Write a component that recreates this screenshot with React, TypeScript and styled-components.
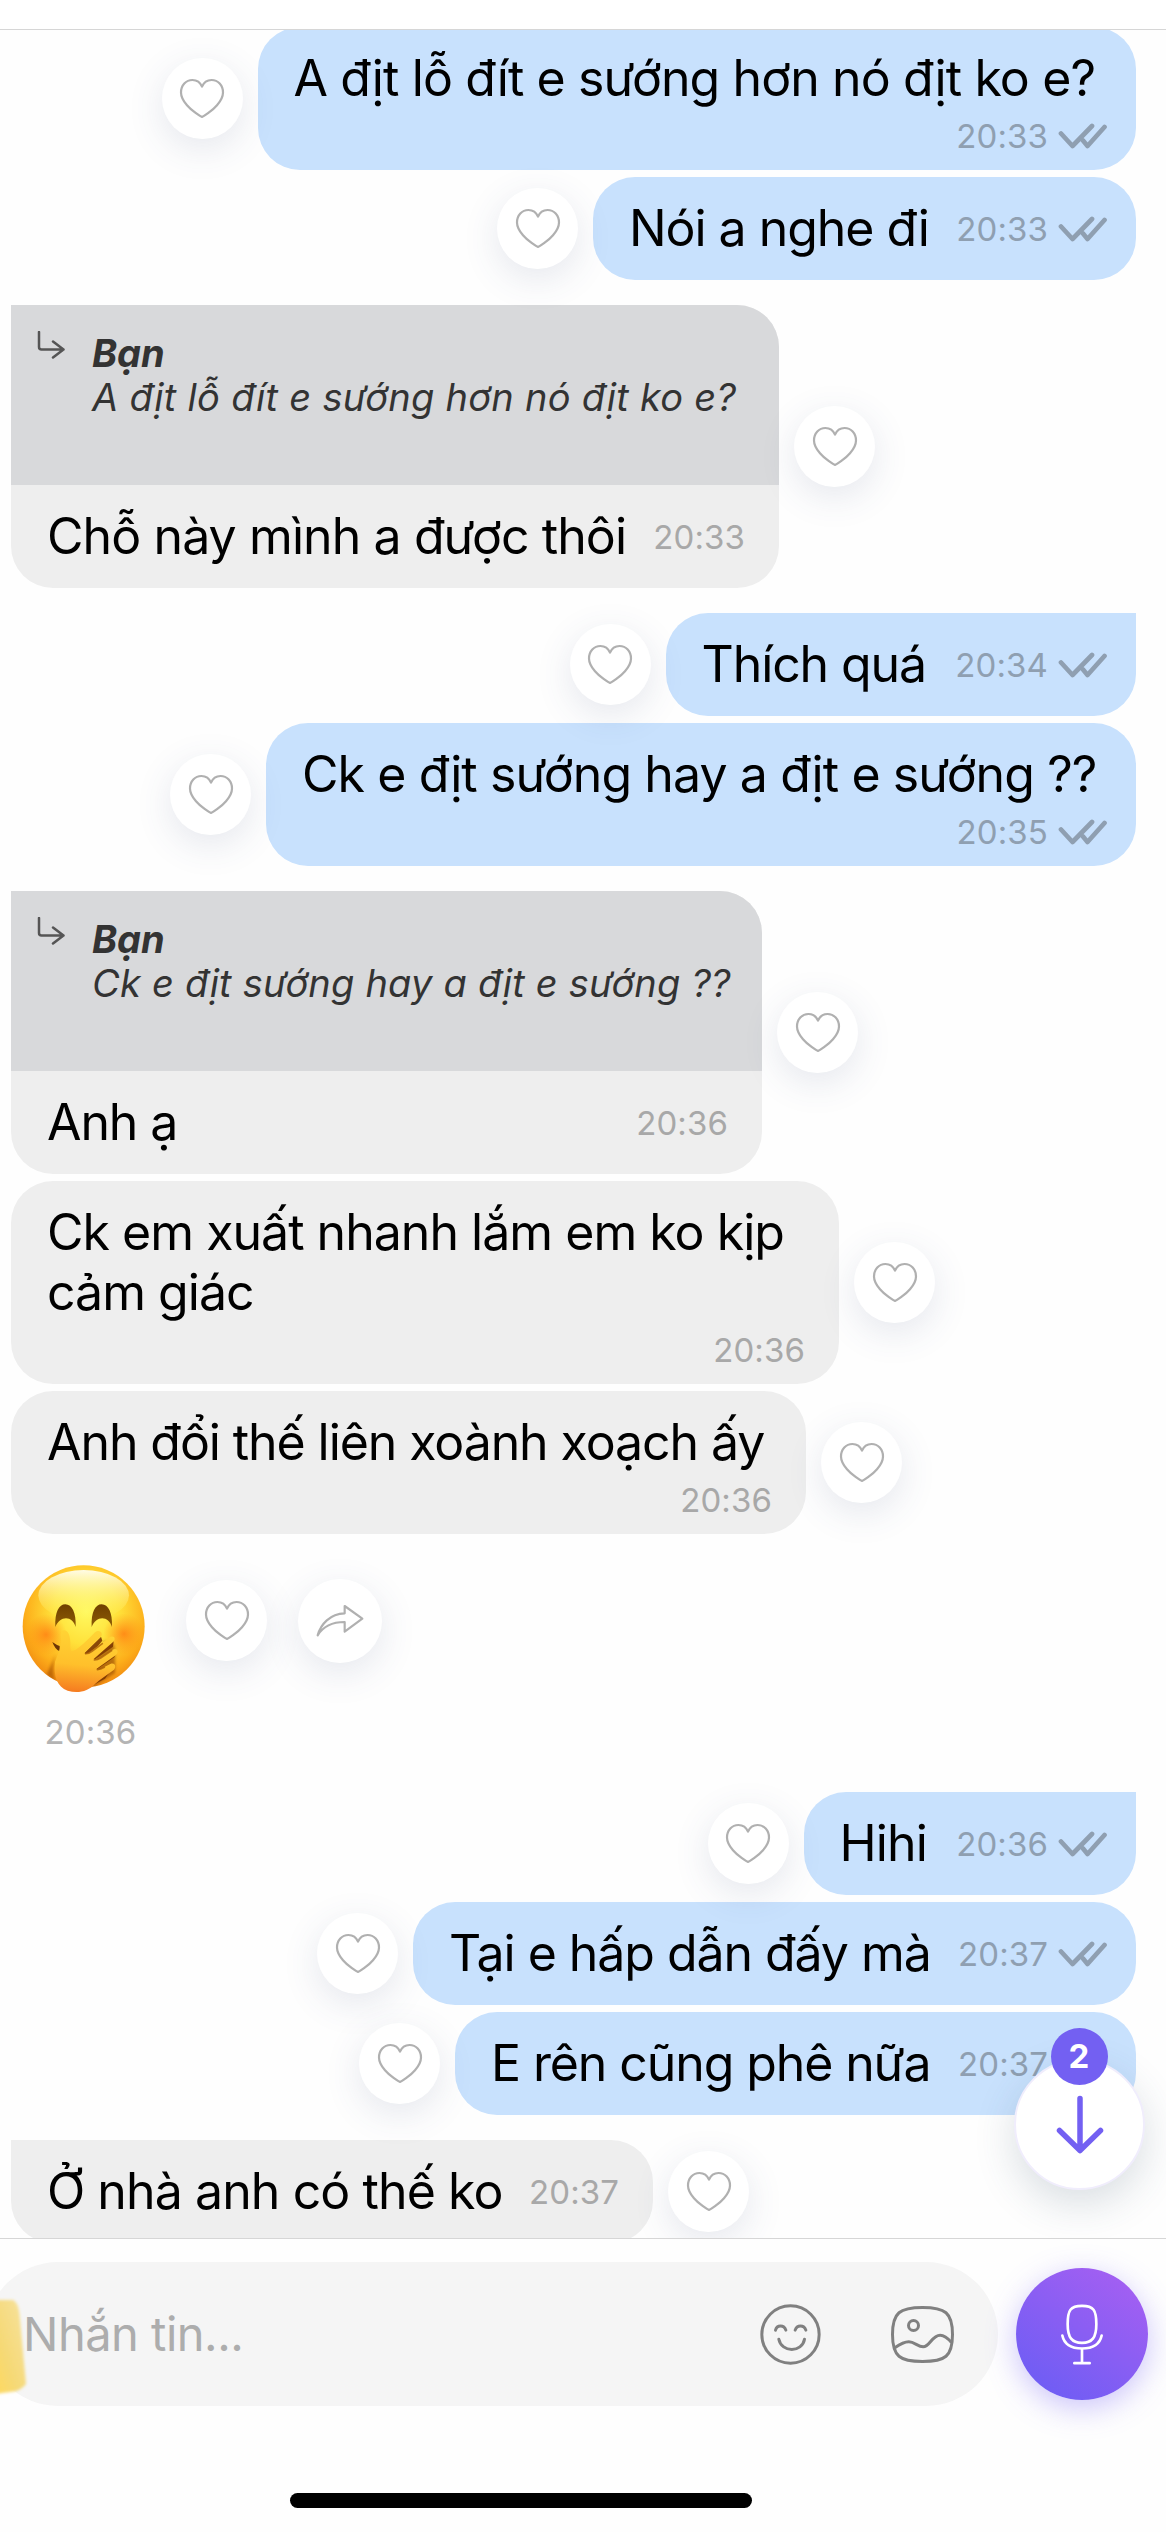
import React from "react";
import styled, { createGlobalStyle, css } from "styled-components";

const Global = createGlobalStyle`
  * { box-sizing: border-box; }
  body {
    margin: 0;
    background: #fefefe;
    font-family: Inter, "Noto Sans", "Liberation Sans", sans-serif;
    color: #000;
  }
`;

const Screen = styled.div`
  width: 1166px;
  height: 2532px;
  display: flex;
  flex-direction: column;
  overflow: hidden;
  background: #fefefe;
`;

const TopBar = styled.header`
  flex: none;
  height: 30px;
  background: #fff;
  border-bottom: 1px solid #d6d6d6;
`;

const Thread = styled.main`
  position: relative;
  flex: none;
  height: 2208px;
  overflow: hidden;
  display: flex;
  flex-direction: column;
  padding: 0 30px 0 11px;
`;

const Row = styled.div<{ $mine?: boolean; $gap: number }>`
  flex: none;
  display: flex;
  flex-direction: ${(p) => (p.$mine ? "row-reverse" : "row")};
  align-items: center;
  gap: 15px;
  margin-top: ${(p) => p.$gap}px;
`;

const Bubble = styled.div<{ $mine?: boolean; $first?: boolean; $width: number }>`
  width: ${(p) => p.$width}px;
  overflow: hidden;
  background: ${(p) => (p.$mine ? "#c8e1fd" : "#eeeeee")};
  border-radius: 42px;
  ${(p) =>
    p.$first &&
    (p.$mine
      ? css`border-top-right-radius: 0;`
      : css`border-top-left-radius: 0;`)}
`;

const Body = styled.div<{ $mine?: boolean; $tall?: boolean }>`
  display: flex;
  flex-direction: ${(p) => (p.$tall ? "column" : "row")};
  justify-content: space-between;
  padding: 21px ${(p) => (p.$mine ? 29 : 34)}px ${(p) => (p.$tall ? 14.5 : 22)}px 36px;
`;

const Text = styled.div<{ $spacing: number }>`
  font-size: 50px;
  line-height: 60px;
  letter-spacing: ${(p) => p.$spacing}px;
  white-space: pre;
`;

const Meta = styled.div<{ $mine?: boolean; $tall?: boolean }>`
  display: flex;
  align-items: flex-start;
  align-self: ${(p) => (p.$tall ? "flex-end" : "flex-start")};
  gap: 10px;
  height: 40px;
  margin-top: ${(p) => (p.$tall ? 8 : 11.5)}px;
  color: ${(p) => (p.$mine ? "#8f9fb1" : "#a8a8a8")};
`;

const Time = styled.time`
  font-size: 33px;
  line-height: 40px;
  letter-spacing: 0.1px;
`;

const Quote = styled.div`
  display: flex;
  height: 180px;
  padding: 26px 0 0 26px;
  gap: 27px;
  background: #d8d9db;
  color: #333;
  font-size: 38px;
  line-height: 44px;
  font-style: italic;
  white-space: pre;
`;

const QuoteText = styled.div<{ $spacing: number }>`
  letter-spacing: ${(p) => p.$spacing}px;
`;

const Author = styled.div`
  font-weight: 700;
  letter-spacing: -0.1px;
`;

const Round = styled.button<{ $size: number }>`
  flex: none;
  z-index: 1;
  width: ${(p) => p.$size}px;
  height: ${(p) => p.$size}px;
  display: flex;
  align-items: center;
  justify-content: center;
  padding: 0;
  border: 0;
  border-radius: 50%;
  background: #fff;
  box-shadow: 0 10px 36px rgba(60, 80, 125, 0.13);
`;

const StickerRow = styled.div`
  flex: none;
  display: flex;
  align-items: flex-start;
  height: 201px;
  margin: 23.5px 0 33px 4px;
`;

const Sticker = styled.div`
  display: flex;
  flex-direction: column;
  align-items: center;
  width: 140px;
  margin-right: 31px;
  color: #b4b4b4;
`;

const StickerTime = styled(Time)`
  margin: 14px 0 0 11px;
`;

const Actions = styled.div`
  display: flex;
  align-items: center;
  gap: 31px;
  height: 126px;
`;

const ScrollDown = styled.button`
  position: absolute;
  z-index: 2;
  left: 1014px;
  top: 2029px;
  width: 131px;
  height: 131px;
  display: flex;
  align-items: center;
  justify-content: center;
  padding: 0;
  border: 2.5px solid #f0edfc;
  border-radius: 50%;
  background: #fff;
  box-shadow: 0 14px 40px rgba(50, 75, 100, 0.18);
`;

const Unread = styled.span`
  position: absolute;
  left: 34.5px;
  top: -33.5px;
  width: 57px;
  height: 57px;
  border-radius: 50%;
  background: #7360f2;
  color: #fff;
  font: 700 33px/57px Inter, sans-serif;
  text-align: center;
`;

const Composer = styled.footer`
  position: relative;
  flex: none;
  display: flex;
  align-items: center;
  gap: 18px;
  height: 191px;
  border-top: 1px solid #d6d6d6;
  background: #fefefe;
`;

const Field = styled.div`
  display: flex;
  align-items: center;
  width: 1012px;
  height: 144px;
  margin-left: -14px;
  padding: 0 43px 0 37px;
  border-radius: 72px;
  background: #f5f5f5;
`;

const Placeholder = styled.span`
  flex: 1;
  font-size: 47px;
  line-height: 60px;
  letter-spacing: -0.5px;
  color: #adadad;
`;

const FieldIcons = styled.div`
  display: flex;
  align-items: center;
  gap: 69px;
`;

const Mic = styled.button`
  flex: none;
  width: 132px;
  height: 132px;
  display: flex;
  align-items: center;
  justify-content: center;
  padding: 0;
  border: 0;
  border-radius: 50%;
  background: linear-gradient(215deg, #a55ff2 8%, #6f5df4 88%);
  box-shadow: 0 8px 30px rgba(115, 95, 245, 0.36);
`;

const Marker = styled.svg`
  position: absolute;
  left: 0;
  top: 48px;
`;

const HomeArea = styled.div`
  flex: 1;
  display: flex;
  justify-content: center;
  align-items: flex-end;
  padding: 0 124px 24px 0;
`;

const HomeBar = styled.div`
  width: 462px;
  height: 15px;
  border-radius: 8px;
  background: #000;
`;

const Heart = () => (
  <svg width="46" height="41" viewBox="-1 -1 46 41" fill="none" stroke="#b0b0b0" strokeWidth="2.2" strokeLinejoin="round">
    <path d="M22 38C20 37.2 12 32 7 26.2C3 21.6 1 17.5 1 13.4C1 6.2 6 1 12.4 1C16.800 1 20.300 3.500 22 7.700C23.700 3.500 27.200 1 31.600 1C38 1 43 6.200 43 13.400C43 17.500 41 21.600 37 26.200C32 32 24 37.200 22 38Z" />
  </svg>
);

const HeartButton = () => (
  <Round $size={81} aria-label="Like">
    <Heart />
  </Round>
);

const Share = () => (
  <svg width="48" height="34" viewBox="952 187 144 102" fill="none" stroke="#b0b0b0" strokeWidth="6.500" strokeLinejoin="round">
    <path d="M957 281C966 248 994 216 1038 215V193L1091 231L1038 270V241C1002 241 974 253 957 281Z" />
  </svg>
);

const Checks = () => (
  <svg width="49" height="40" viewBox="1058 644 49 40" fill="none" stroke="#8f9fb1" strokeWidth="4.700" strokeLinecap="round" strokeLinejoin="round">
    <path d="M1061 661.500L1072.500 674L1092 654M1083 668.500L1087.500 674L1104.500 655" />
  </svg>
);

const ReplyArrow = () => (
  <svg width="28" height="30" viewBox="0 1 28 30" fill="none" stroke="#555" strokeWidth="2.500" strokeLinecap="round" strokeLinejoin="round">
    <path d="M2 2V17Q2 19.500 4.500 19.500H26.500M16 11.500L26.500 19.500L16 27.500" />
  </svg>
);

const Smile = () => (
  <svg width="61" height="61" viewBox="181.500 220.500 183 183" fill="none" stroke="#808080" strokeWidth="9" strokeLinecap="round">
    <circle cx="273" cy="312" r="86" />
    <path d="M228 299C232 282 254 282 259 299M287 299C292 282 314 282 319 299M238 326C246 367 308 367 315 326" />
  </svg>
);

const Gallery = () => (
  <svg width="65" height="59" viewBox="571.500 223.500 195 177" fill="none" stroke="#808080" strokeWidth="9">
    <path d="M669 231C737 231 759 246 759 312C759 378 737 393 669 393C601 393 579 378 579 312C579 246 601 231 669 231Z" />
    <circle cx="642" cy="285" r="15" />
    <path d="M586 352C603 340 615 334 628 334C645 334 655 349 671 349C691 349 697 314 722 314C736 314 746 324 756 336" />
  </svg>
);

const MicIcon = () => (
  <svg width="44" height="63" viewBox="1080 217.500 132 189" fill="none" stroke="#fff" strokeWidth="8" strokeLinecap="round">
    <path d="M1146 226C1181 226 1189 239 1189 281C1189 322 1176 337 1146 337C1116 337 1103 322 1103 281C1103 239 1111 226 1146 226Z" />
    <path d="M1087 315C1093 343 1114 354 1146 354C1178 354 1199 343 1205 315M1146 354V398M1123 398H1169" />
  </svg>
);

const DownArrow = () => (
  <svg width="48" height="60" viewBox="0 0 48 60" fill="none" stroke="#7360f2" strokeWidth="5.500" strokeLinecap="round" strokeLinejoin="round">
    <path d="M24 3.500V55.500M3.500 35.500L24 55.500L44.500 35.500" />
  </svg>
);

const GiggleFace = () => (
  <svg width="140" height="140" viewBox="0 0 420 420">
    <defs>
      <radialGradient id="face" cx="0.52" cy="0.38" r="0.64">
        <stop offset="0" stopColor="#fff95f" />
        <stop offset="0.42" stopColor="#ffe13a" />
        <stop offset="0.78" stopColor="#fdae1a" />
        <stop offset="1" stopColor="#ef8510" />
      </radialGradient>
      <linearGradient id="shine" x1="0" y1="0" x2="0" y2="1">
        <stop offset="0" stopColor="#fffef0" stopOpacity="0.95" />
        <stop offset="1" stopColor="#fff95f" stopOpacity="0" />
      </linearGradient>
      <radialGradient id="cheek">
        <stop offset="0" stopColor="#ff7d12" stopOpacity="0.8" />
        <stop offset="1" stopColor="#ff8f12" stopOpacity="0" />
      </radialGradient>
      <linearGradient id="eye" x1="0" y1="0" x2="0" y2="1">
        <stop offset="0" stopColor="#704000" />
        <stop offset="1" stopColor="#8d5c05" />
      </linearGradient>
      <linearGradient id="hand" x1="0.35" y1="0" x2="0.25" y2="1">
        <stop offset="0" stopColor="#ffd435" />
        <stop offset="0.55" stopColor="#ffc02b" />
        <stop offset="1" stopColor="#f57a20" />
      </linearGradient>
      <filter id="soft" x="-20%" y="-20%" width="140%" height="140%">
        <feGaussianBlur stdDeviation="5" />
      </filter>
      <clipPath id="disc">
        <circle cx="206" cy="205" r="183" />
      </clipPath>
    </defs>
    <circle cx="206" cy="205" r="183" fill="url(#face)" />
    <ellipse cx="206" cy="112" rx="136" ry="76" fill="url(#shine)" />
    <circle cx="93" cy="230" r="62" fill="url(#cheek)" />
    <circle cx="327" cy="228" r="62" fill="url(#cheek)" />
    <path d="M121 207C119 162 132 139 151 139C171 139 184 164 182 207C173 172 134 172 121 207Z" fill="url(#eye)" />
    <path d="M230 207C228 162 241 139 260 139C280 139 293 164 291 207C281 172 243 172 230 207Z" fill="url(#eye)" />
    <g clipPath="url(#disc)">
      <path d="M112 252Q126 262 134 264V280Q120 274 112 252Z" fill="#6d3505" />
      <path d="M122 290Q108 330 120 372L95 350Z" fill="#a85404" opacity="0.7" filter="url(#soft)" />
      <path d="M268 248L298 262L300 290L300 345L220 395L240 310Z" fill="#8b3f04" opacity="0.6" filter="url(#soft)" />
      <path d="M208 284L258 236L262 248L232 285L296 250L294 266L232 310L250 309L306 280L298 298L242 337L300 320L270 362L215 392Z" fill="#7d3703" opacity="0.9" />
    </g>
    <path
      d="M120 312C127 291 136 276 139 250C136 231 136 218 147 217C158 216 166 232 166 254C166 266 165 274 169 278C178 282 199 266 240 223C252 212 266 224 258 236L208 286C213 289 220 286 229 279L284 238C296 230 305 242 294 252L236 303C239 307 247 305 255 300L293 275C305 267 314 281 303 291L245 332C248 337 255 334 262 330L286 318C299 312 306 326 296 336C275 352 255 365 241 377C219 401 188 407 158 398C126 387 115 353 120 312Z"
      fill="url(#hand)"
    />
    <path d="M212 287Q222 287 232 279L262 257M238 306Q248 305 257 300L290 278M247 335Q257 334 268 328" fill="none" stroke="#a65a08" strokeWidth="5" opacity="0.75" strokeLinecap="round" />
  </svg>
);

interface MessageProps {
  text: string;
  time: string;
  width: number;
  gap: number;
  spacing?: number;
  mine?: boolean;
  first?: boolean;
  tall?: boolean;
  quote?: string;
  quoteSpacing?: number;
}

const Message = ({ text, time, width, gap, spacing = -0.9, mine, first, tall, quote, quoteSpacing = 0 }: MessageProps) => (
  <Row $mine={mine} $gap={gap}>
    <Bubble $mine={mine} $first={first} $width={width}>
      {quote && (
        <Quote>
          <ReplyArrow />
          <QuoteText $spacing={quoteSpacing}>
            <Author>Bạn</Author>
            {quote}
          </QuoteText>
        </Quote>
      )}
      <Body $mine={mine} $tall={tall}>
        <Text $spacing={spacing}>{text}</Text>
        <Meta $mine={mine} $tall={tall}>
          <Time>{time}</Time>
          {mine && <Checks />}
        </Meta>
      </Body>
    </Bubble>
    <HeartButton />
  </Row>
);

export default function App() {
  return (
    <Screen>
      <Global />
      <TopBar />
      <Thread>
        <Message mine tall gap={-3.5} width={878.5} spacing={-0.87} text="A địt lỗ đít e sướng hơn nó địt ko e?" time="20:33" />
        <Message mine gap={6.5} width={543} spacing={-1.05} text="Nói a nghe đi" time="20:33" />
        <Message
          first
          gap={25}
          width={768}
          quote="A địt lỗ đít e sướng hơn nó địt ko e?"
          quoteSpacing={0.29}
          text="Chỗ này mình a được thôi"
          time="20:33"
        />
        <Message mine first gap={25} width={470.5} spacing={-1.1} text="Thích quá" time="20:34" />
        <Message mine tall gap={7} width={870} text="Ck e địt sướng hay a địt e sướng ??" time="20:35" />
        <Message
          first
          gap={24.5}
          width={751}
          quote="Ck e địt sướng hay a địt e sướng ??"
          quoteSpacing={0.21}
          text="Anh ạ"
          spacing={-1.1}
          time="20:36"
        />
        <Message tall gap={7} width={828} spacing={-0.98} text={"Ck em xuất nhanh lắm em ko kịp\ncảm giác"} time="20:36" />
        <Message tall gap={6.5} width={795} spacing={-1.08} text="Anh đổi thế liên xoành xoạch ấy" time="20:36" />
        <StickerRow>
          <Sticker>
            <GiggleFace />
            <StickerTime>20:36</StickerTime>
          </Sticker>
          <Actions>
            <HeartButton />
            <Round $size={84} aria-label="Share">
              <Share />
            </Round>
          </Actions>
        </StickerRow>
        <Message mine first gap={0} width={332.5} text="Hihi" time="20:36" />
        <Message mine gap={7} width={723} spacing={-1.05} text="Tại e hấp dẫn đấy mà" time="20:37" />
        <Message mine gap={7} width={681} spacing={-1.1} text="E rên cũng phê nữa" time="20:37" />
        <Message first gap={25} width={642} text="Ở nhà anh có thế ko" time="20:37" />
        <ScrollDown aria-label="Scroll to latest">
          <DownArrow />
          <Unread>2</Unread>
        </ScrollDown>
      </Thread>
      <Composer>
        <Field>
          <Placeholder>Nhắn tin...</Placeholder>
          <FieldIcons>
            <Smile />
            <Gallery />
          </FieldIcons>
        </Field>
        <Mic aria-label="Record voice message">
          <MicIcon />
        </Mic>
        <Marker width="34" height="120" viewBox="0 0 34 120">
          <defs>
            <linearGradient id="ink" x1="1" y1="0" x2="0" y2="1">
              <stop offset="0" stopColor="#f7e3a0" />
              <stop offset="0.6" stopColor="#f5d977" />
              <stop offset="1" stopColor="#ffd95c" />
            </linearGradient>
            <filter id="edge" x="-30%" y="-10%" width="160%" height="120%">
              <feGaussianBlur stdDeviation="1.6" />
            </filter>
          </defs>
          <path d="M-6 13H13Q18 15 19.500 27L26 97Q21 104 10 105L-6 107Z" fill="url(#ink)" filter="url(#edge)" />
        </Marker>
      </Composer>
      <HomeArea>
        <HomeBar />
      </HomeArea>
    </Screen>
  );
}
